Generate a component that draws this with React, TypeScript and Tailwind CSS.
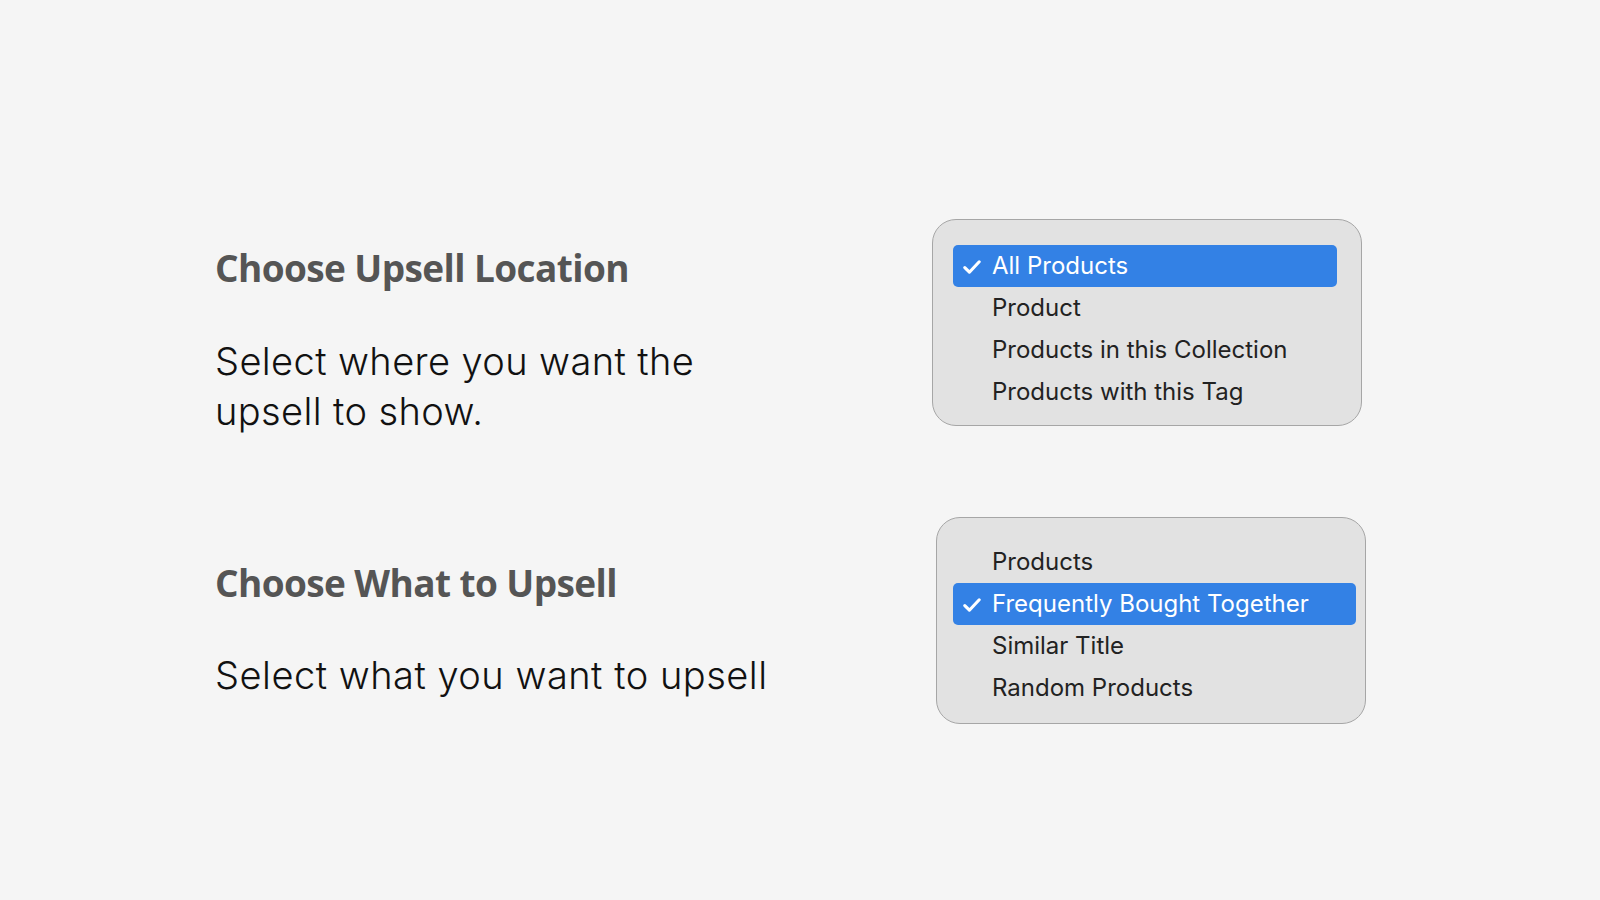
import React from "react";

type Item = { label: string; checked?: boolean };

function Check() {
  return (
    <svg width="18" height="14" viewBox="0 0 18 14" className="shrink-0">
      <path d="M1.8 7.6 L6.4 12.2 L16.2 1.8" fill="none" stroke="white" strokeWidth="3.1" strokeLinecap="round" strokeLinejoin="round" />
    </svg>
  );
}

function PopupMenu({ items, className }: { items: Item[]; className: string }) {
  return (
    <div className={`w-[430px] h-[207px] shrink-0 rounded-[24px] border border-[#a6a6a6] bg-[#e2e2e2] ${className}`}>
      {items.map((item) =>
        item.checked ? (
          <div key={item.label} className="h-[42px] flex items-center rounded-[5px] bg-[#3381e5] text-white">
            <span className="w-[39px] flex pl-[10px] pt-[1px]">
              <Check />
            </span>
            <span>{item.label}</span>
          </div>
        ) : (
          <div key={item.label} className="h-[42px] flex items-center pl-[39px] text-[#222]">
            {item.label}
          </div>
        )
      )}
    </div>
  );
}

export default function App() {
  return (
    <main className="w-full h-[900px] bg-[#f5f5f5] overflow-hidden pl-[215px] pt-[219px] font-['Inter',sans-serif]">
      <section className="flex items-start h-[207px]">
        <div className="w-[717px] pt-[29px]">
          <h2 className="text-[37px] leading-[40px] font-bold text-[#555] font-['Open_Sans',sans-serif] tracking-[-0.6px]">
            Choose Upsell Location
          </h2>
          <p className="mt-[48px] text-[38px] leading-[50px] font-light text-[#111] tracking-[0.4px]">
            Select where you want the
            <br />
            upsell to show.
          </p>
        </div>
        <PopupMenu
          className="text-[24px] pl-[20px] pr-[24px] pt-[25px]"
          items={[
            { label: "All Products", checked: true },
            { label: "Product" },
            { label: "Products in this Collection" },
            { label: "Products with this Tag" },
          ]}
        />
      </section>

      <section className="flex items-start h-[207px] mt-[91px]">
        <div className="w-[721px] pt-[46px]">
          <h2 className="text-[37px] leading-[40px] font-bold text-[#555] font-['Open_Sans',sans-serif] tracking-[-0.6px]">
            Choose What to Upsell
          </h2>
          <p className="mt-[47px] text-[38px] leading-[50px] font-light text-[#111] tracking-[0.5px]">
            Select what you want to upsell
          </p>
        </div>
        <PopupMenu
          className="text-[24px] pl-[16px] pr-[9px] pt-[23px]"
          items={[
            { label: "Products" },
            { label: "Frequently Bought Together", checked: true },
            { label: "Similar Title" },
            { label: "Random Products" },
          ]}
        />
      </section>
    </main>
  );
}
